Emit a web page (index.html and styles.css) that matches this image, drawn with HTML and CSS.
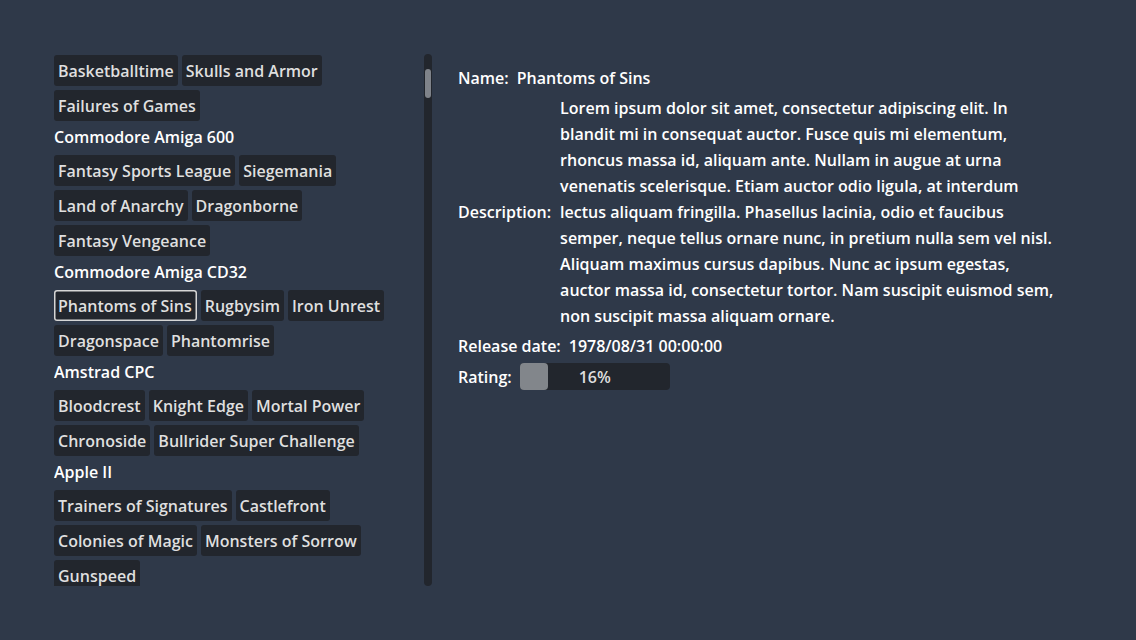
FILE: index.html
```html
<!DOCTYPE html>
<html>
<head>
<meta charset="utf-8">
<link rel="stylesheet" href="styles.css">
</head>
<body>
<div class="app">
  <div class="scroller">
    <div class="list">
      <div class="flow">
        <button class="btn">Basketballtime</button>
        <button class="btn">Skulls and Armor</button>
        <button class="btn">Failures of Games</button>
      </div>
      <div class="platform">Commodore Amiga 600</div>
      <div class="flow">
        <button class="btn">Fantasy Sports League</button>
        <button class="btn">Siegemania</button>
        <button class="btn">Land of Anarchy</button>
        <button class="btn">Dragonborne</button>
        <button class="btn">Fantasy Vengeance</button>
      </div>
      <div class="platform">Commodore Amiga CD32</div>
      <div class="flow">
        <button class="btn focused">Phantoms of Sins</button>
        <button class="btn">Rugbysim</button>
        <button class="btn">Iron Unrest</button>
        <button class="btn">Dragonspace</button>
        <button class="btn">Phantomrise</button>
      </div>
      <div class="platform">Amstrad CPC</div>
      <div class="flow">
        <button class="btn">Bloodcrest</button>
        <button class="btn">Knight Edge</button>
        <button class="btn">Mortal Power</button>
        <button class="btn">Chronoside</button>
        <button class="btn">Bullrider Super Challenge</button>
      </div>
      <div class="platform">Apple II</div>
      <div class="flow">
        <button class="btn">Trainers of Signatures</button>
        <button class="btn">Castlefront</button>
        <button class="btn">Colonies of Magic</button>
        <button class="btn">Monsters of Sorrow</button>
        <button class="btn">Gunspeed</button>
      </div>
    </div>
    <div class="vscroll"><div class="thumb"></div></div>
  </div>
  <div class="details">
    <div class="row row-name">
      <span class="key">Name:</span>
      <span class="val">Phantoms of Sins</span>
    </div>
    <div class="row row-desc">
      <span class="key">Description:</span>
      <div class="desc">
        <span class="line">Lorem ipsum dolor sit amet, consectetur adipiscing elit. In</span>
        <span class="line">blandit mi in consequat auctor. Fusce quis mi elementum,</span>
        <span class="line">rhoncus massa id, aliquam ante. Nullam in augue at urna</span>
        <span class="line">venenatis scelerisque. Etiam auctor odio ligula, at interdum</span>
        <span class="line">lectus aliquam fringilla. Phasellus lacinia, odio et faucibus</span>
        <span class="line">semper, neque tellus ornare nunc, in pretium nulla sem vel nisl.</span>
        <span class="line">Aliquam maximus cursus dapibus. Nunc ac ipsum egestas,</span>
        <span class="line">auctor massa id, consectetur tortor. Nam suscipit euismod sem,</span>
        <span class="line">non suscipit massa aliquam ornare.</span>
      </div>
    </div>
    <div class="row row-date">
      <span class="key">Release date:</span>
      <span class="val">1978/08/31 00:00:00</span>
    </div>
    <div class="row row-rating">
      <span class="key">Rating:</span>
      <div class="progress">
        <div class="fill" style="width:28px"></div>
        <span class="pct">16%</span>
      </div>
    </div>
  </div>
</div>
</body>
</html>
```

FILE: styles.css
```css
html, body {
  margin: 0;
  padding: 0;
  background: #2f3949;
  width: 1136px;
  height: 640px;
  overflow: hidden;
  font-family: "Open Sans", "Noto Sans", sans-serif;
  font-weight: 600;
  font-size: 16px;
}

.app {
  display: flex;
  align-items: flex-start;
  padding: 54px 0 0 54px;
}

.scroller {
  display: flex;
  width: 378px;
  height: 532px;
}

.list {
  flex: 1;
  overflow: hidden;
  padding-top: 1px;
  display: flex;
  flex-direction: column;
  gap: 4px;
}

.flow {
  flex-shrink: 0;
  display: flex;
  flex-wrap: wrap;
  gap: 4px;
  width: 366px;
}

.btn {
  font: inherit;
  color: #dfdfdf;
  background: #22262d;
  border: none;
  border-radius: 3px;
  height: 31px;
  padding: 1px 4px 0;
  line-height: 30px;
  white-space: nowrap;
  box-sizing: border-box;
}

.btn.focused {
  padding-right: 5px;
  box-shadow: inset 0 0 0 1.5px #d6d6d6;
}

.platform {
  flex-shrink: 0;
  color: #ffffff;
  height: 26px;
  line-height: 24px;
}

.vscroll {
  flex-shrink: 0;
  width: 8px;
  height: 532px;
  background: #22262d;
  border-radius: 4px;
  padding: 15px 1px 0;
  box-sizing: border-box;
}

.thumb {
  width: 6px;
  height: 29px;
  background: #7f838a;
  border-radius: 3px;
}

.details {
  margin-left: 26px;
  padding-top: 11px;
  display: flex;
  flex-direction: column;
  color: #ffffff;
}

.row {
  display: flex;
  align-items: center;
  gap: 8px;
}

.row-name {
  height: 26px;
}

.row-desc {
  margin-top: 4px;
  gap: 9px;
}

.desc {
  display: flex;
  flex-direction: column;
  line-height: 26px;
}

.line {
  white-space: nowrap;
}

.row-date {
  margin-top: 4px;
  height: 26px;
}

.row-rating {
  margin-top: 4px;
  height: 27px;
}

.progress {
  position: relative;
  width: 150px;
  height: 27px;
  background: #22262d;
  border-radius: 4px;
  display: flex;
  align-items: center;
  justify-content: center;
}

.fill {
  position: absolute;
  left: 0;
  top: 0;
  bottom: 0;
  background: #82868b;
  border-radius: 4px;
}

.pct {
  position: relative;
  color: #dfdfdf;
}
```
